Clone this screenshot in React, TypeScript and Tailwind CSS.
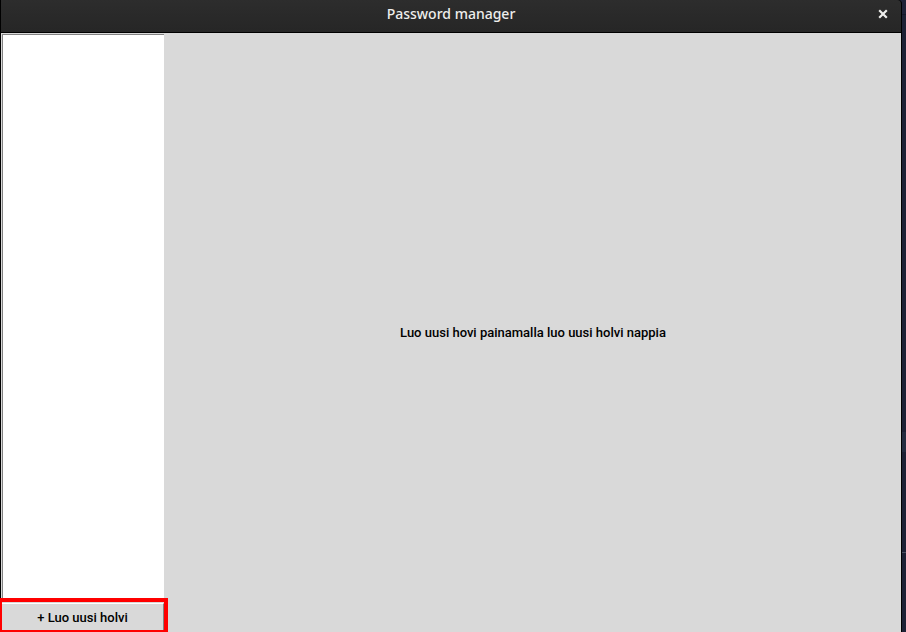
function TitleBar() {
  return (
    <header className="grid h-[33px] shrink-0 grid-cols-[1fr_auto_1fr] items-center rounded-tr border-b border-black bg-linear-to-b from-[#2d2d2d] to-[#262626] pb-1">
      <span />
      <h1 className="font-['Noto_Sans',sans-serif] text-sm leading-5 font-medium text-[#eeeeec]">
        Password manager
      </h1>
      <button type="button" aria-label="Close" className="mr-3 justify-self-end p-px text-[#eeeeec]">
        <svg viewBox="0 0 10 10" className="size-2.5" fill="none" stroke="currentColor" strokeWidth="2.2">
          <path d="M1.2 1.2 8.8 8.8M8.8 1.2 1.2 8.8" />
        </svg>
      </button>
    </header>
  );
}

function Sidebar() {
  return (
    <aside className="flex w-[164px] shrink-0 flex-col">
      <div className="flex flex-1 border-t border-r border-l border-[#d9d9d9]">
        <div className="flex-1 border-t border-l border-[#828282] bg-white" />
      </div>
      <div className="-mr-[3px] -ml-px h-[34px] border-t-4 border-r-4 border-b-2 border-l-2 border-[#ff0000] bg-[#d9d9d9] pt-px">
        <button
          type="button"
          className="block h-full w-full border-t border-r border-t-white border-r-[#828282] pt-px text-[13px] leading-5 font-medium text-black"
        >
          + Luo uusi holvi
        </button>
      </div>
    </aside>
  );
}

function Desktop() {
  return (
    <div className="flex w-1 shrink-0 flex-col bg-[#1d2135]" aria-hidden="true">
      <div className="h-[15px] border-b border-[#15182a] bg-[#1f2238]" />
      <div className="mt-[417px] h-5 bg-[#242c40]" />
      <div className="mt-[100px] h-px bg-[#4a5062]" />
    </div>
  );
}

export default function App() {
  return (
    <div className="flex h-screen bg-[#1d2135] font-['Roboto',sans-serif]">
      <div className="flex min-w-0 flex-1 flex-col rounded-tr border-r border-l border-black bg-black">
        <TitleBar />
        <div className="flex min-h-0 flex-1 bg-[#d9d9d9]">
          <Sidebar />
          <main className="flex flex-1 items-center justify-center">
            <p className="text-[13px] leading-5 font-medium text-black">
              Luo uusi hovi painamalla luo uusi holvi nappia
            </p>
          </main>
        </div>
      </div>
      <Desktop />
    </div>
  );
}
